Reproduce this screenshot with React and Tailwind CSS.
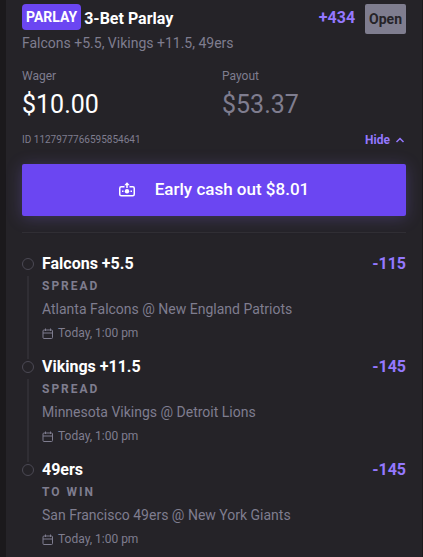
const LEGS = [
  { id: 1, pick: 'Falcons +5.5', market: 'SPREAD', game: 'Atlanta Falcons @ New England Patriots', time: 'Today, 1:00 pm', odds: '-115' },
  { id: 2, pick: 'Vikings +11.5', market: 'SPREAD', game: 'Minnesota Vikings @ Detroit Lions', time: 'Today, 1:00 pm', odds: '-145' },
  { id: 3, pick: '49ers', market: 'TO WIN', game: 'San Francisco 49ers @ New York Giants', time: 'Today, 1:00 pm', odds: '-145' },
]

export default function App() {
  return (
    <div className="min-h-screen bg-[#1b191c] pl-1.5 pr-px font-['Roboto',sans-serif] text-[#7f7d8f]">
      <main className="min-h-screen bg-[#252328] px-4 pt-1">
        <header className="flex items-start justify-between">
          <div className="flex items-start gap-[3px]">
            <span className="rounded bg-[#6b46f2] px-1 text-sm leading-[26px] font-bold text-white">PARLAY</span>
            <h1 className="text-base leading-[30px] font-bold text-white">3-Bet Parlay</h1>
          </div>
          <div className="flex items-start gap-2.5">
            <span className="text-base leading-7 font-bold text-[#9478ff]">+434</span>
            <span className="rounded-xs bg-[#7f7d8f] px-1 text-sm leading-[30px] font-bold text-[#252328]">Open</span>
          </div>
        </header>
        <p className="text-sm leading-[18px]">Falcons +5.5, Vikings +11.5, 49ers</p>

        <dl className="mt-4 grid grid-cols-[200px_1fr]">
          <div>
            <dt className="text-xs leading-4">Wager</dt>
            <dd className="mt-1 text-[25px] leading-[34px] text-white">$10.00</dd>
          </div>
          <div>
            <dt className="text-xs leading-4">Payout</dt>
            <dd className="mt-1 text-[25px] leading-[34px]">$53.37</dd>
          </div>
        </dl>

        <div className="mt-2 flex items-center justify-between">
          <span className="text-[10px] leading-5">ID 1127977766595854641</span>
          <button type="button" className="flex items-center gap-1 text-xs leading-5 font-bold text-[#9478ff]">
            Hide <ChevronUp />
          </button>
        </div>

        <button type="button" className="mt-3.5 flex h-13 w-full items-center justify-center gap-5 rounded-xs bg-[#6b46f2] text-[17px] font-medium text-white shadow-[0_2px_16px_rgba(148,120,255,0.25)]">
          <CashOutIcon />
          Early cash out $8.01
        </button>

        <hr className="mt-4 border-[#302e34]" />

        <ol className="mt-[19px]">
          {LEGS.map(leg => <Leg key={leg.id} leg={leg} />)}
        </ol>
      </main>
    </div>
  )
}

function Leg({ leg }) {
  return (
    <li className="group flex gap-2">
      <div className="flex w-3 shrink-0 flex-col items-center pt-1.5">
        <span className="size-3 rounded-full border border-[#4b4954]"></span>
        <span className="mt-1.5 -mb-1 w-0.5 grow bg-[#302e34] group-last:hidden"></span>
      </div>
      <div className="min-w-0 flex-1 pb-2.5 group-last:pb-0">
        <div className="flex justify-between text-base leading-6 font-bold">
          <h2 className="text-white">{leg.pick}</h2>
          <span className="text-[#9478ff]">{leg.odds}</span>
        </div>
        <div className="text-xs leading-5 font-bold tracking-[2px]">{leg.market}</div>
        <div className="text-sm leading-[26px]">{leg.game}</div>
        <div className="flex items-center gap-1 text-xs leading-[23px]">
          <CalendarIcon />
          <span>{leg.time}</span>
        </div>
      </div>
    </li>
  )
}

function ChevronUp() {
  return (
    <svg className="size-3" viewBox="0 0 12 12" fill="none" stroke="currentColor" strokeWidth="1.5" aria-hidden="true">
      <path d="M2.5 8 6 4.5 9.5 8" />
    </svg>
  )
}

function CalendarIcon() {
  return (
    <svg className="size-3" viewBox="0 0 12 12" fill="none" stroke="currentColor" aria-hidden="true">
      <rect x="1" y="2" width="9.5" height="8.5" rx="1" />
      <path d="M1 5h9.5M3.5 0.5v2.5M8.5 0.5v2.5" />
    </svg>
  )
}

function CashOutIcon() {
  return (
    <svg className="size-4" viewBox="0 0 16 16" fill="none" stroke="currentColor" strokeWidth="1.5" aria-hidden="true">
      <path d="M5.5 4.75H2.25A1.5 1.5 0 0 0 0.75 6.25v6a1.5 1.5 0 0 0 1.5 1.5h11.5a1.5 1.5 0 0 0 1.5-1.5v-6a1.5 1.5 0 0 0-1.5-1.5H10.5" />
      <path d="M8 6V1.5" />
      <path d="M5.25 3.25 8 0.25l2.75 3z" fill="currentColor" stroke="none" />
      <circle cx="8" cy="9.25" r="2.2" fill="currentColor" stroke="none" />
      <path d="M3 9.25h1.5M11.5 9.25H13" />
    </svg>
  )
}
